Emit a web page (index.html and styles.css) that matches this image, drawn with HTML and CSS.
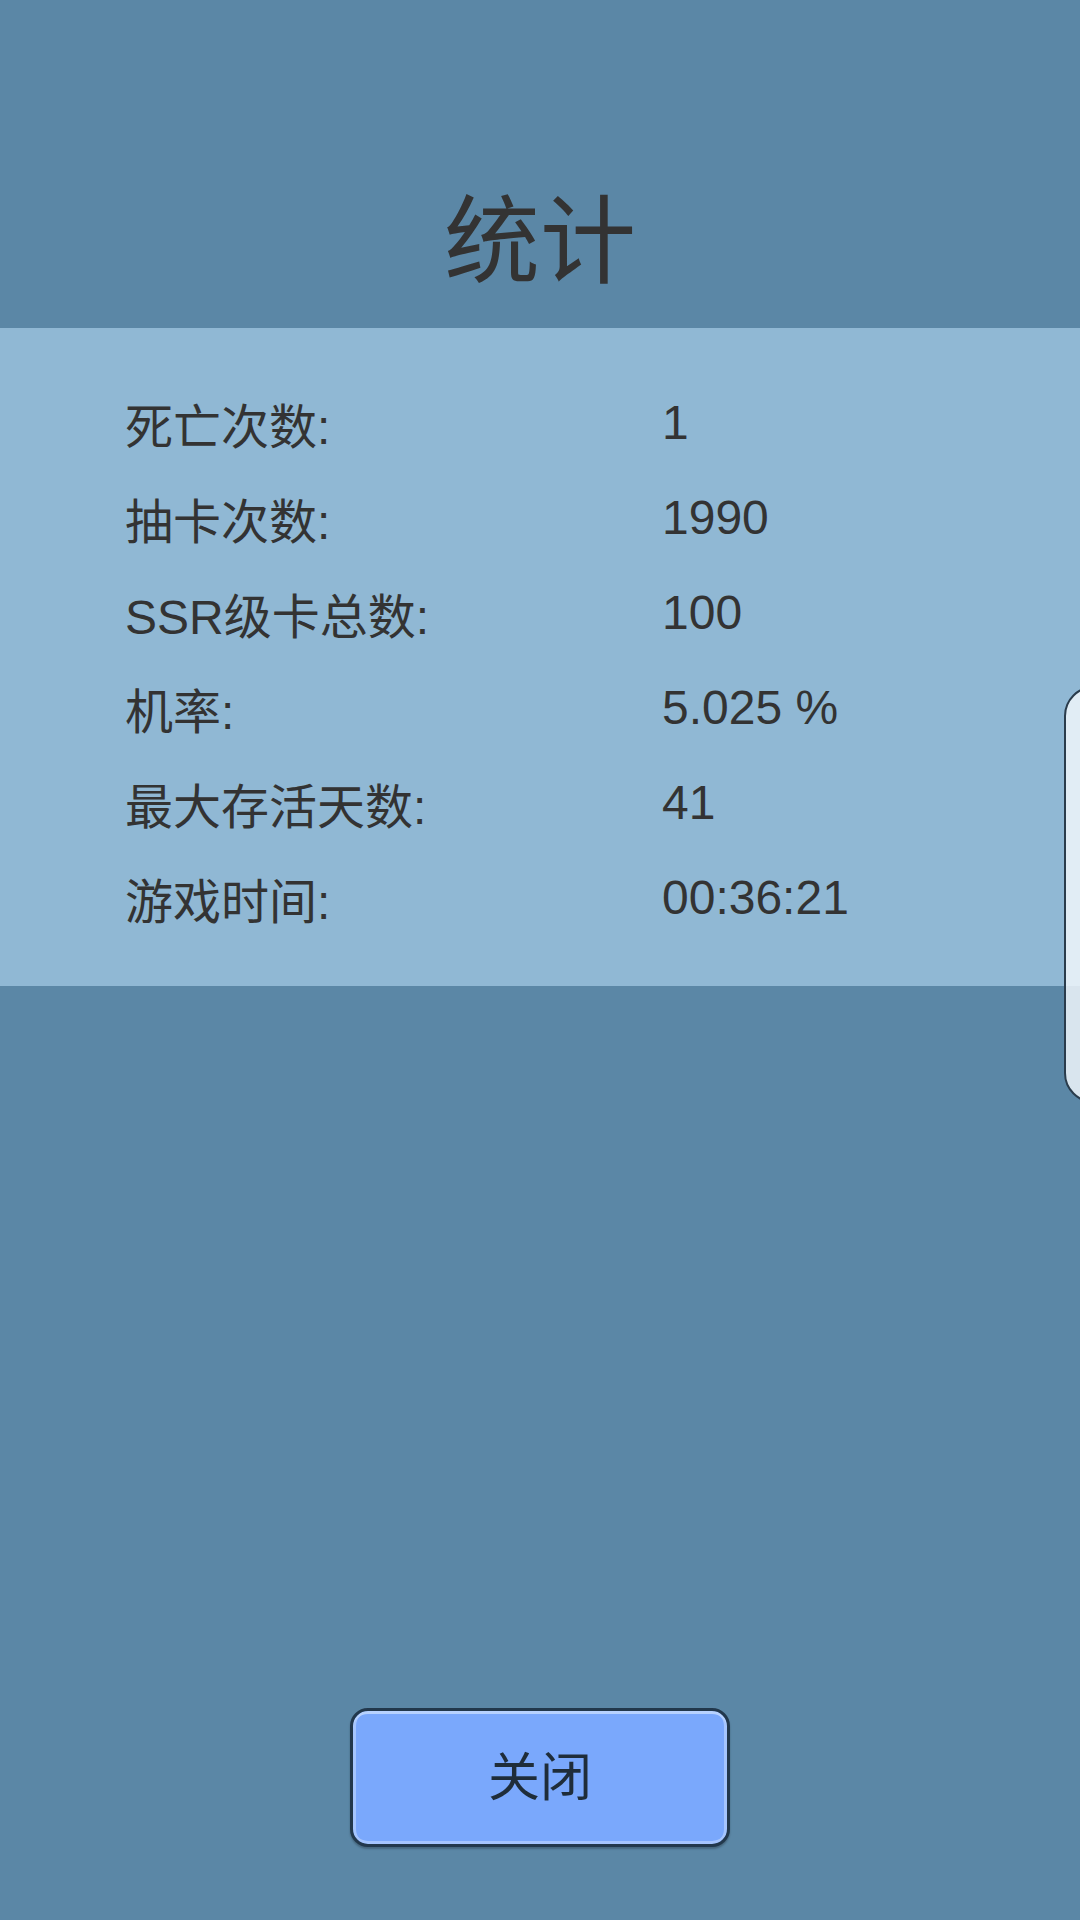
FILE: index.html
```html
<!DOCTYPE html>
<html lang="zh-CN">
<head>
<meta charset="utf-8">
<title>统计</title>
<link rel="stylesheet" href="styles.css">
</head>
<body>
<div class="screen">
  <header class="title-bar">
    <h1 class="title">统计</h1>
  </header>
  <section class="stats">
    <div class="row"><span class="label">死亡次数:</span><span class="value">1</span></div>
    <div class="row"><span class="label">抽卡次数:</span><span class="value">1990</span></div>
    <div class="row"><span class="label">SSR级卡总数:</span><span class="value">100</span></div>
    <div class="row"><span class="label">机率:</span><span class="value">5.025 %</span></div>
    <div class="row"><span class="label">最大存活天数:</span><span class="value">41</span></div>
    <div class="row"><span class="label">游戏时间:</span><span class="value">00:36:21</span></div>
  </section>
  <div class="spacer"></div>
  <footer class="actions">
    <button class="close-btn">关闭</button>
  </footer>
  <div class="side-tab"></div>
</div>
</body>
</html>
```
FILE: styles.css
```css
* { box-sizing: border-box; }
html, body {
  margin: 0;
  padding: 0;
  width: 1080px;
  height: 1920px;
  overflow: hidden;
  background: #5b87a6;
}
.screen {
  position: relative;
  width: 1080px;
  height: 1920px;
  display: flex;
  flex-direction: column;
  font-family: "Liberation Sans", "Noto Sans CJK SC", sans-serif;
  color: #333333;
}
.title-bar {
  height: 328px;
  display: flex;
  justify-content: center;
  align-items: flex-start;
  padding-top: 182px;
}
.title {
  margin: 0;
  font-weight: normal;
  font-size: 96px;
  line-height: 120px;
  color: #333333;
}
.stats {
  height: 658px;
  background: #90b8d4;
  padding: 47px 0 0 125px;
  display: flex;
  flex-direction: column;
}
.row {
  height: 95px;
  display: flex;
  align-items: center;
  font-size: 48px;
}
.label {
  width: 537px;
}
.value {
  flex: 1;
}
.spacer { flex: 1; }
.actions {
  display: flex;
  justify-content: center;
  padding-bottom: 73px;
}
.close-btn {
  width: 380px;
  height: 139px;
  border: 3px solid #22384c;
  border-radius: 18px;
  background: #7aa8fc;
  box-shadow: inset 0 3px 0 #b7d2ff, inset 3px 0 0 #a5c5fe, inset -3px 0 0 #a5c5fe, inset 0 -3px 0 #a5c5fe, 0 2px 2px rgba(0,0,0,0.25);
  font-family: "Liberation Sans", "Noto Sans CJK SC", sans-serif;
  font-size: 52px;
  color: #1f2d3a;
  padding: 0 0 8px 0;
}
.side-tab {
  position: absolute;
  left: 1064px;
  top: 686px;
  width: 60px;
  height: 417px;
  border: 2px solid #2a3c4c;
  border-radius: 40px;
  background: rgba(240, 246, 250, 0.85);
}
```
